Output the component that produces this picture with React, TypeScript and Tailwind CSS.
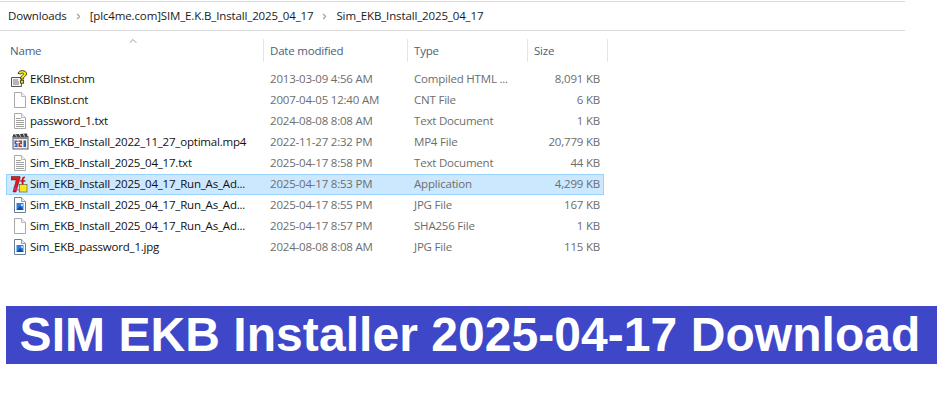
import { ChevronRight, ChevronUp } from "lucide-react";

const PAGE = "M2.5 .5H9.5L13.5 4.5V15.5H2.5Z";

function PageBase({ children }: { children?: React.ReactNode }) {
  return (
    <svg width="16" height="16" viewBox="0 0 16 16" className="shrink-0">
      <path d={PAGE} fill="#fff" stroke="#a8a8a8" />
      <path d="M9.5 .5V4.5H13.5" fill="#f2f2f2" stroke="#b8b8b8" />
      {children}
    </svg>
  );
}

function TextIcon() {
  return (
    <PageBase>
      <path d="M4 5.5H9M4 7.5H12M4 9.5H12M4 11.5H12M4 13.5H12" stroke="#a0a0a0" />
    </PageBase>
  );
}

function JpgIcon() {
  return (
    <svg width="16" height="16" viewBox="0 0 16 16" className="shrink-0">
      <path d={PAGE} fill="#fff" stroke="#6d7f94" />
      <path d="M9.5 .5V4.5H13.5" fill="#eef2f6" stroke="#8c9aab" />
      <rect x="4.5" y="6" width="7" height="7" fill="#2f7fdc" />
      <path d="M4.5 13L8 9L11.5 13Z" fill="#0b4fa8" />
      <rect x="9" y="7" width="2" height="2" fill="#a9dbf9" />
    </svg>
  );
}

function HelpIcon() {
  return (
    <svg width="18" height="18" viewBox="0 0 18 18" className="shrink-0">
      <path d="M.5 7.5H10.5V16.5H.5Z" fill="#f4f4f4" stroke="#555" />
      <path d="M2 10H7M2 12H8M2 14H8" stroke="#777" />
      <path
        d="M7 3.4C7.6 1.3 9.6.5 11.4.6C13.8.7 15.7 1.9 15.5 4C15.4 5.7 13.8 6.3 13 7.1C12.6 7.5 12.5 8.2 12.5 9H9.6C9.5 7.6 9.9 6.4 11 5.6C11.6 5.1 12.6 4.8 12.5 3.8C12.4 2.8 10.4 2.8 10 4.1Z"
        fill="#f7e617"
        stroke="#3f380c"
        strokeWidth=".9"
      />
      <rect x="9.6" y="10.2" width="3" height="3" fill="#f7e617" stroke="#3f380c" strokeWidth=".9" />
    </svg>
  );
}

function ClapperIcon() {
  return (
    <svg width="17" height="17" viewBox="0 0 17 17" className="shrink-0">
      <rect x="1" y="3.5" width="15" height="12.5" fill="#ececec" stroke="#5a5a5a" />
      <path d="M1 1.5L15 .5L15.5 3.5H1Z" fill="#3a3a3a" />
      <path d="M3.5 1.5L4.5 3.5M7.5 1L8.5 3.5M11.5 1L12.5 3.5" stroke="#e8e8e8" />
      <path d="M1 4H16V6H1Z" fill="#8a8a8a" />
      <path d="M2.5 7.5H5.5V9H4V10.2H5.5V14H2.5V12.6H4.2V11.5H2.5Z" fill="#2b62b8" />
      <path d="M6.5 7.5H10V11.3H8V12.6H10V14H6.5V10H8.2V9H6.5Z" fill="#b23a2c" />
      <path d="M11.5 7.5H14V14H11.5Z" fill="#2b62b8" />
    </svg>
  );
}

function SevenZipIcon() {
  return (
    <svg width="18" height="18" viewBox="0 0 18 18" className="shrink-0">
      <path d="M0 1.5H9V3.5L5 17H2L5.2 5H0Z" fill="#e01b24" stroke="#5a0d10" strokeWidth=".5" />
      <path d="M2 13L9 15.5" stroke="#d43fae" />
      <rect x="8.5" y="9.5" width="7.5" height="7.5" fill="#f6e72a" stroke="#57500c" strokeWidth=".6" />
      <path d="M11 3C12 1.5 13.5 1.5 13.9 1.5V3.2C13 3.2 12.5 3.6 12.5 5V9.5H10.7V5Z" fill="#c0141c" />
      <rect x="9.3" y="5.2" width="5" height="1.5" fill="#c0141c" />
    </svg>
  );
}

type FileRow = {
  name: string;
  date: string;
  type: string;
  size: string;
  icon: React.ReactNode;
  selected?: boolean;
};

const files: FileRow[] = [
  { name: "EKBInst.chm", date: "2013-03-09 4:56 AM", type: "Compiled HTML ...", size: "8,091 KB", icon: <HelpIcon /> },
  { name: "EKBInst.cnt", date: "2007-04-05 12:40 AM", type: "CNT File", size: "6 KB", icon: <PageBase /> },
  { name: "password_1.txt", date: "2024-08-08 8:08 AM", type: "Text Document", size: "1 KB", icon: <TextIcon /> },
  { name: "Sim_EKB_Install_2022_11_27_optimal.mp4", date: "2022-11-27 2:32 PM", type: "MP4 File", size: "20,779 KB", icon: <ClapperIcon /> },
  { name: "Sim_EKB_Install_2025_04_17.txt", date: "2025-04-17 8:58 PM", type: "Text Document", size: "44 KB", icon: <TextIcon /> },
  { name: "Sim_EKB_Install_2025_04_17_Run_As_Ad...", date: "2025-04-17 8:53 PM", type: "Application", size: "4,299 KB", icon: <SevenZipIcon />, selected: true },
  { name: "Sim_EKB_Install_2025_04_17_Run_As_Ad...", date: "2025-04-17 8:55 PM", type: "JPG File", size: "167 KB", icon: <JpgIcon /> },
  { name: "Sim_EKB_Install_2025_04_17_Run_As_Ad...", date: "2025-04-17 8:57 PM", type: "SHA256 File", size: "1 KB", icon: <PageBase /> },
  { name: "Sim_EKB_password_1.jpg", date: "2024-08-08 8:08 AM", type: "JPG File", size: "115 KB", icon: <JpgIcon /> },
];

const rowGrid = "grid grid-cols-[258px_144px_120px_72px]";

export default function App() {
  return (
    <div className="h-[402px] w-[949px] overflow-hidden bg-white font-['Open_Sans','Noto_Sans',sans-serif] text-[11.5px] tracking-[-0.2px]">
      <div className="mt-[1px] flex h-[30px] w-[905px] items-center border-y border-[#d9d9d9] pl-[8px] tracking-[-0.14px] text-[#1a1a1a]">
        <span>Downloads</span>
        <ChevronRight className="mx-[7px] h-[9px] w-[9px] text-[#a0a0a0]" strokeWidth={3} />
        <span>[plc4me.com]SIM_E.K.B_Install_2025_04_17</span>
        <ChevronRight className="mx-[7px] h-[9px] w-[9px] text-[#a0a0a0]" strokeWidth={3} />
        <span>Sim_EKB_Install_2025_04_17</span>
      </div>

      <div className="relative ml-[6px] mt-[7px] h-[24px] w-[602px] pt-[1px] text-[#4c607a]">
        <ChevronUp className="absolute left-[121px] top-[-3px] h-[12px] w-[12px] text-[#777]" strokeWidth={1.5} />
        <div className={`${rowGrid} h-full`}>
          <div className="flex items-center border-r border-[#e5e5e5] pl-[4px]">Name</div>
          <div className="flex items-center border-r border-[#e5e5e5] pl-[6px]">Date modified</div>
          <div className="flex items-center border-r border-[#e5e5e5] pl-[6px]">Type</div>
          <div className="flex w-[80px] items-center border-r border-[#e5e5e5] pl-[6px]">Size</div>
        </div>
      </div>

      <div className="ml-[6px] mt-[7px] w-[598px]">
        {files.map((f, i) => (
          <div
            key={i}
            className={`${rowGrid} h-[21px] items-center border pb-[2px] ${f.selected ? "border-[#99d1ff] bg-[#cce8ff]" : "border-transparent"}`}
          >
            <div className="flex items-center gap-[2px] whitespace-nowrap pl-[5px] text-[#111]">
              <div className="flex h-[16px] w-[16px] items-center justify-center">{f.icon}</div>
              <span>{f.name}</span>
            </div>
            <div className="whitespace-nowrap pl-[5px] text-[#6d6d6d]">{f.date}</div>
            <div className="whitespace-nowrap pl-[5px] text-[#6d6d6d]">{f.type}</div>
            <div className="whitespace-nowrap pr-[1px] text-right text-[#6d6d6d]">{f.size}</div>
          </div>
        ))}
      </div>

      <div className="ml-[6px] mt-[48px] flex h-[58px] w-[931px] items-center justify-center bg-[#3f47c9] pr-[3px] font-['Liberation_Sans',Arial,sans-serif] text-[48px] font-bold tracking-[0.05px] text-white">
        SIM EKB Installer 2025-04-17 Download
      </div>
    </div>
  );
}
